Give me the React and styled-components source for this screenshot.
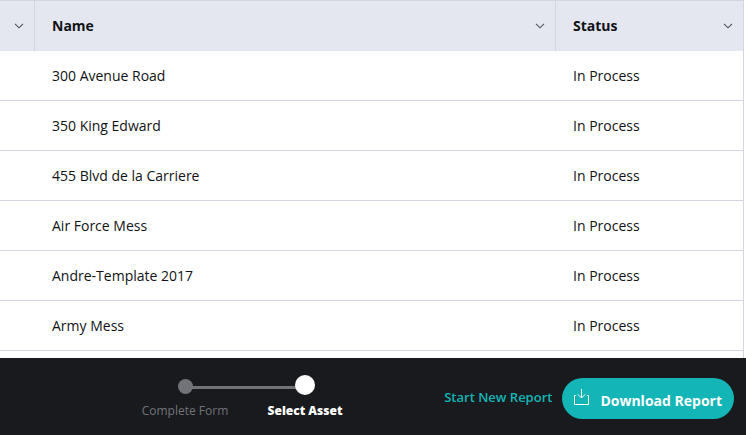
import React from 'react';
import styled, { createGlobalStyle } from 'styled-components';

const GlobalStyle = createGlobalStyle`
  *, *::before, *::after { box-sizing: border-box; }
  body {
    margin: 0;
    background: #fff;
    color: #111216;
    font-family: 'Open Sans', 'Noto Sans', sans-serif;
    font-size: 14px;
    line-height: 20px;
  }
`;

const Page = styled.div`
  display: flex;
  flex-direction: column;
  height: 100vh;
`;

const TableArea = styled.main`
  flex: 1;
  min-height: 0;
  overflow: hidden;
  padding-right: 2px;
`;

const Table = styled.table`
  width: 100%;
  table-layout: fixed;
  border-collapse: separate;
  border-spacing: 0;
  border-top: 1px solid #d3d5e1;
  border-right: 1px solid #d3d5e1;
`;

const HeaderCell = styled.th`
  width: ${({ $width }) => $width || 'auto'};
  height: 50px;
  padding: 0 10px 0 ${({ $compact }) => ($compact ? '0' : '17px')};
  background: #e4e7f0;
  border-right: 1px solid #d3d5e1;
  text-align: left;
  font-weight: 700;

  &:last-child { border-right: 0; }
`;

const HeaderContent = styled.div`
  display: flex;
  align-items: center;
  justify-content: space-between;
`;

const MenuButton = styled.button`
  display: flex;
  margin-left: auto;
  padding: 0;
  border: 0;
  background: none;
  color: #50525a;
  cursor: pointer;
`;

const Cell = styled.td`
  height: 50px;
  padding: 0 17px;
  border-bottom: 1px solid #d3d5e1;
`;

const Footer = styled.footer`
  display: flex;
  align-items: flex-start;
  justify-content: space-between;
  min-height: 77px;
  padding: 17px 12px 0 125px;
  background: #191a1e;
`;

const Stepper = styled.ol`
  display: grid;
  grid-template-columns: 120px 120px;
  grid-template-rows: 20px auto;
  row-gap: 8px;
  margin: 0;
  padding: 0;
  list-style: none;
`;

const Connector = styled.li`
  grid-area: 1 / 1 / 2 / 3;
  align-self: center;
  height: 3px;
  margin: 4px 60px 0;
  background: #727378;
`;

const Step = styled.li`
  display: grid;
  grid-row: 1 / 3;
  grid-column: ${({ $column }) => $column};
  grid-template-rows: subgrid;
  justify-items: center;
  color: ${({ $active }) => ($active ? '#fff' : '#727378')};
  font-size: 12px;
  line-height: 16px;
  font-weight: ${({ $active }) => ($active ? 800 : 400)};
`;

const StepDot = styled.span`
  align-self: ${({ $active }) => ($active ? 'center' : 'end')};
  width: ${({ $active }) => ($active ? '20px' : '15px')};
  aspect-ratio: 1;
  margin-bottom: ${({ $active }) => ($active ? '0' : '1px')};
  border-radius: 50%;
  background: currentColor;
`;

const Actions = styled.div`
  display: flex;
  align-items: center;
  gap: 10px;
  padding-top: 3px;
`;

const TextButton = styled.button`
  padding: 0 0 4px;
  border: 0;
  background: none;
  color: #13b5b6;
  font: 600 13px/20px 'Open Sans', 'Noto Sans', sans-serif;
  white-space: nowrap;
  cursor: pointer;
`;

const PrimaryButton = styled.button`
  display: flex;
  align-items: flex-start;
  gap: 11px;
  height: 41px;
  padding: 11px 12px 0;
  border: 0;
  border-radius: 21px;
  background: #13b5b6;
  color: #fff;
  font: 700 14px/24px 'Open Sans', 'Noto Sans', sans-serif;
  white-space: nowrap;
  cursor: pointer;
`;

const assets = [
  '300 Avenue Road',
  '350 King Edward',
  '455 Blvd de la Carriere',
  'Air Force Mess',
  'Andre-Template 2017',
  'Army Mess',
];

function ColumnMenu({ label }) {
  return (
    <MenuButton type="button" aria-label={label}>
      <svg width="10" height="6" viewBox="0 0 10 6" fill="none" stroke="currentColor" strokeWidth="1.1">
        <path d="M1 .8 5 4.8 9 .8" />
      </svg>
    </MenuButton>
  );
}

function DownloadIcon() {
  return (
    <svg width="15" height="17" viewBox="0 0 15 17" fill="none" stroke="currentColor" aria-hidden="true">
      <path d="M2 6.5H.5v9h14v-9H13M7.5 0v9M3.8 5.3l3.7 3.7 3.7-3.7" />
    </svg>
  );
}

export default function App() {
  return (
    <Page>
      <GlobalStyle />
      <TableArea>
        <Table>
          <thead>
            <tr>
              <HeaderCell scope="col" $width="35px" $compact>
                <HeaderContent><ColumnMenu label="Column options" /></HeaderContent>
              </HeaderCell>
              <HeaderCell scope="col">
                <HeaderContent>Name<ColumnMenu label="Name options" /></HeaderContent>
              </HeaderCell>
              <HeaderCell scope="col" $width="187px">
                <HeaderContent>Status<ColumnMenu label="Status options" /></HeaderContent>
              </HeaderCell>
            </tr>
          </thead>
          <tbody>
            {assets.map((name) => (
              <tr key={name}>
                <Cell />
                <Cell>{name}</Cell>
                <Cell>In Process</Cell>
              </tr>
            ))}
          </tbody>
          <tfoot>
            <tr><Cell colSpan={3} /></tr>
          </tfoot>
        </Table>
      </TableArea>
      <Footer>
        <Stepper>
          <Connector aria-hidden="true" />
          <Step $column={1}><StepDot />Complete Form</Step>
          <Step $column={2} $active aria-current="step"><StepDot $active />Select Asset</Step>
        </Stepper>
        <Actions>
          <TextButton type="button">Start New Report</TextButton>
          <PrimaryButton type="button"><DownloadIcon />Download Report</PrimaryButton>
        </Actions>
      </Footer>
    </Page>
  );
}
